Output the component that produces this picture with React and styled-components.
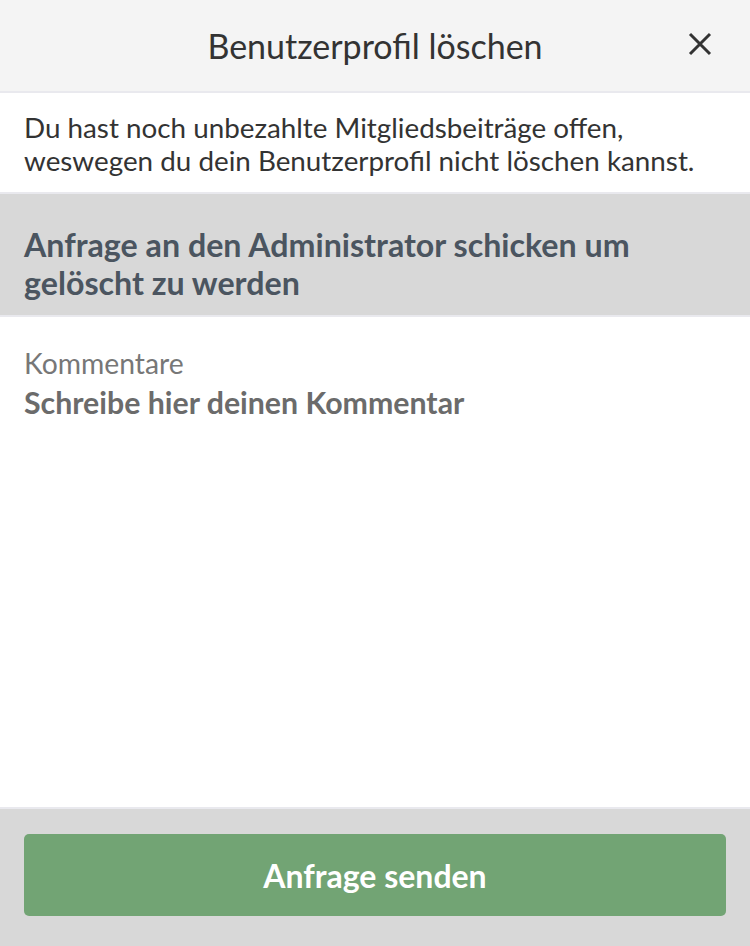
import styled, { createGlobalStyle } from "styled-components";

const GlobalStyle = createGlobalStyle`
    html, body {
        margin: 0;
        padding: 0;
        background: #ffffff;
    }
    body {
        font-family: Lato, "Open Sans", sans-serif;
    }
    #root {
        height: 100vh;
    }
`;

const Page = styled.div`
    height: 100vh;
    display: flex;
    flex-direction: column;
    box-sizing: border-box;
    background: #ffffff;
`;

const Header = styled.header`
    height: 91px;
    flex-shrink: 0;
    background: #f4f4f4;
    border-bottom: 2px solid #e9e9ee;
    display: flex;
    align-items: center;
    justify-content: center;
    position: relative;

    h1 {
        margin: 0;
        font-size: 34px;
        font-weight: 400;
        color: #333333;
    }
`;

const CloseButton = styled.button`
    position: absolute;
    right: 36px;
    top: 30px;
    width: 28px;
    height: 28px;
    padding: 0;
    border: none;
    background: none;
    display: flex;
    align-items: center;
    justify-content: center;
    cursor: pointer;
`;

const Section = styled.section`
    flex-shrink: 0;
    padding: ${(p) => p.$padding};
    background: ${(p) => (p.$muted ? "#d8d8d8" : "#ffffff")};
    border-bottom: 2px solid #e9e9ee;
`;

const Message = styled.p`
    margin: 0;
    font-size: 27.8px;
    line-height: 33px;
    color: #333333;
`;

const Heading = styled.h2`
    margin: 0;
    font-size: 32.2px;
    line-height: 38px;
    font-weight: 700;
    color: #4b5560;
`;

const CommentArea = styled.div`
    flex: 1;
    padding: 30px 24px 0;
    display: flex;
    flex-direction: column;
    gap: 3px;
    border-bottom: 2px solid #e9e9ee;

    label {
        font-size: 28.3px;
        line-height: 33px;
        color: #777777;
    }
`;

const CommentInput = styled.textarea`
    border: none;
    outline: none;
    resize: none;
    padding: 0;
    margin: 0;
    font-family: inherit;
    font-size: 30.3px;
    line-height: 38px;
    font-weight: 700;
    color: #6b6b6b;
    background: transparent;
    height: 40px;

    &::placeholder {
        color: #6b6b6b;
        opacity: 1;
    }
`;

const Footer = styled.footer`
    flex-shrink: 0;
    background: #d8d8d8;
    padding: 25px 24px 30px;
`;

const SendButton = styled.button`
    width: 100%;
    height: 82px;
    border: none;
    border-radius: 5px;
    background: #72a474;
    color: #ffffff;
    font-family: inherit;
    font-size: 32px;
    font-weight: 700;
    cursor: pointer;
`;

const App = () => {
    return (
        <>
            <GlobalStyle />
            <Page>
                <Header>
                    <h1>Benutzerprofil löschen</h1>
                    <CloseButton aria-label="Schließen">
                        <svg width="24" height="24" viewBox="0 0 24 24">
                            <path d="M2 2 L22 22 M22 2 L2 22" stroke="#333" strokeWidth="3" fill="none" />
                        </svg>
                    </CloseButton>
                </Header>
                <Section $padding="18px 24px 15px">
                    <Message>
                        Du hast noch unbezahlte Mitgliedsbeiträge offen,
                        <br />
                        weswegen du dein Benutzerprofil nicht löschen kannst.
                    </Message>
                </Section>
                <Section $muted $padding="32px 24px 13px">
                    <Heading>
                        Anfrage an den Administrator schicken um
                        <br />
                        gelöscht zu werden
                    </Heading>
                </Section>
                <CommentArea>
                    <label htmlFor="comment">Kommentare</label>
                    <CommentInput id="comment" placeholder="Schreibe hier deinen Kommentar" />
                </CommentArea>
                <Footer>
                    <SendButton>Anfrage senden</SendButton>
                </Footer>
            </Page>
        </>
    );
};

export default App;
